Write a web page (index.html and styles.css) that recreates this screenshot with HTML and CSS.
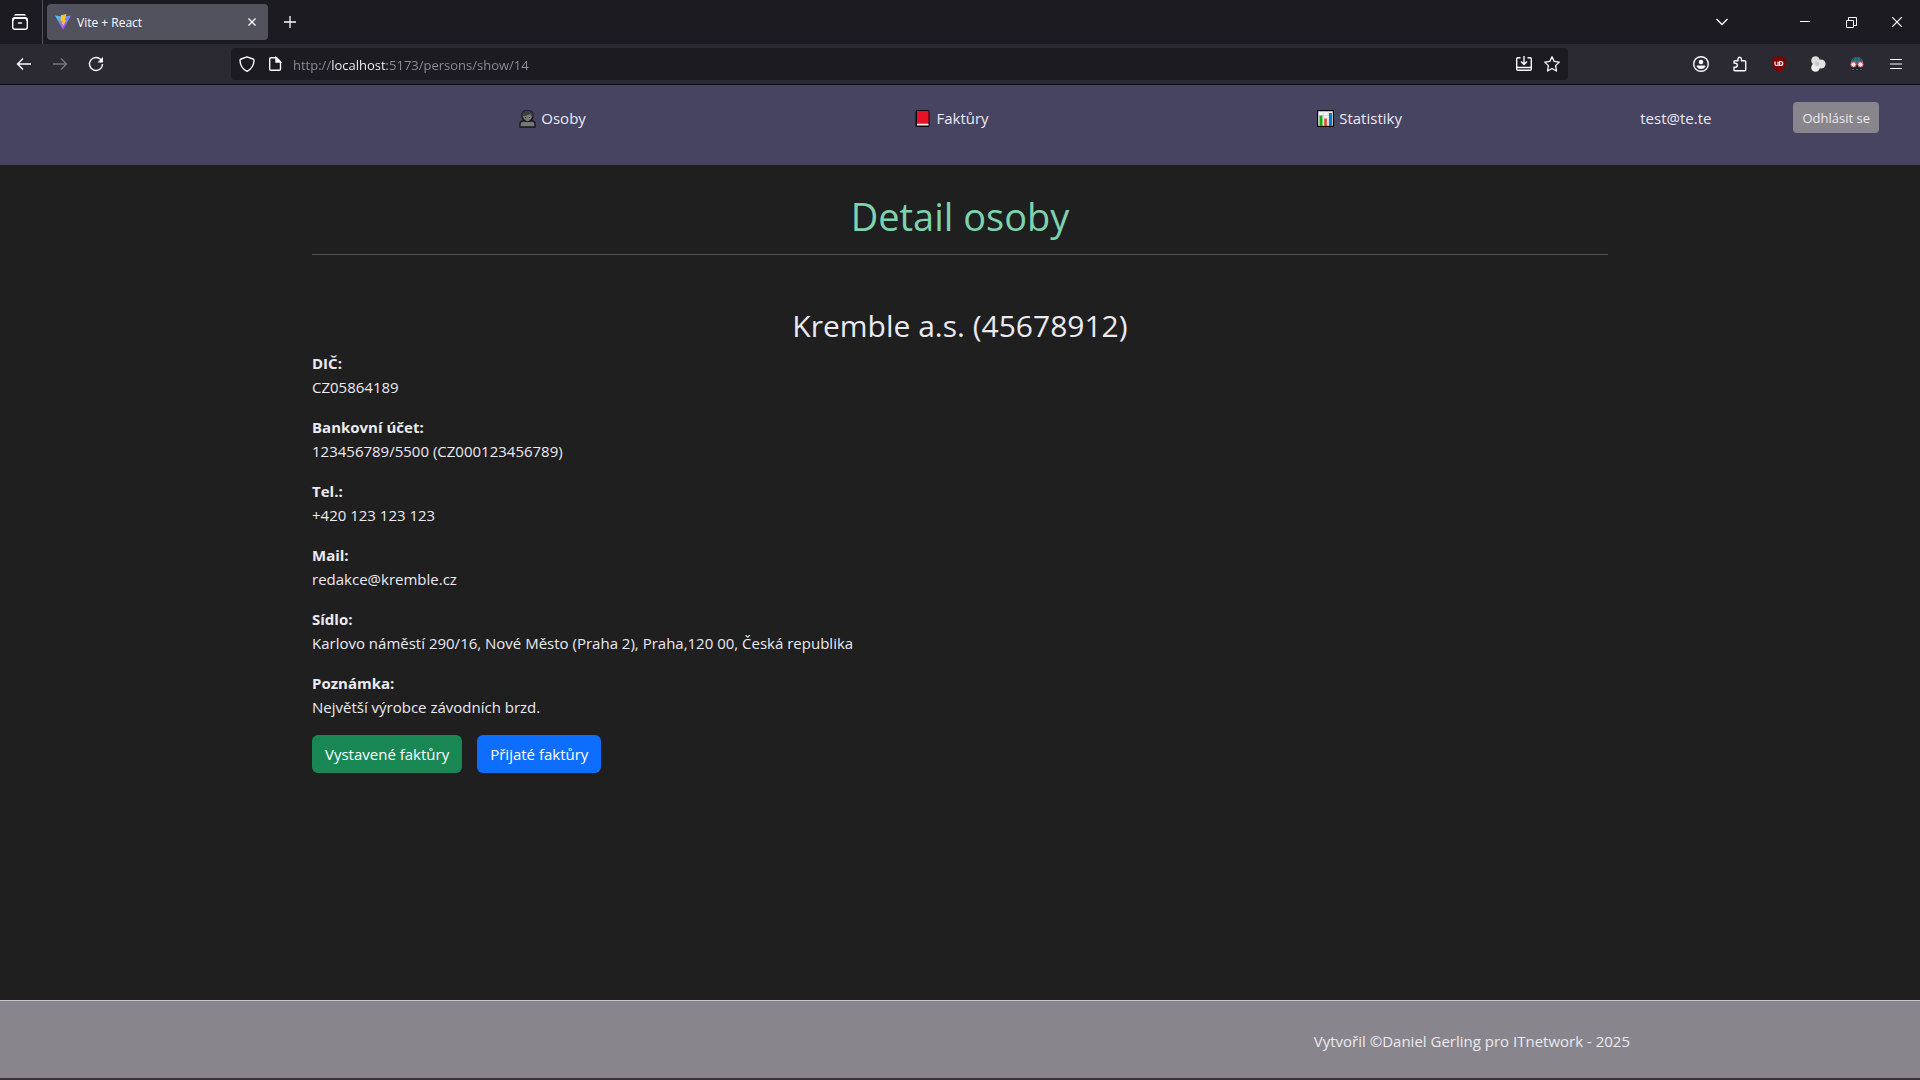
FILE: index.html
```html
<!DOCTYPE html>
<html lang="cs">
<head>
  <meta charset="UTF-8" />
  <meta name="viewport" content="width=device-width, initial-scale=1.0" />
  <title>Vite + React</title>
  <link rel="stylesheet" href="styles.css">
</head>
<body>

  <!-- Browser tabs -->
  <div class="tabbar">
    <button class="icon-btn view-btn" aria-label="Firefox View">
      <svg width="16" height="16" viewBox="0 0 16 16" fill="none" stroke="#fbfbfe" stroke-width="1.4" stroke-linecap="round"><path d="M3 1.2Q3.300 .7 4 .7h8q.7 0 1 .5"/><rect x=".7" y="3.700" width="14.600" height="11.600" rx="2"/><path d="M1 6.500q.3-2.300 2-2.300h10q1.700 0 2 2.300M6.500 9h3"/></svg>
    </button>
    <div class="tab">
      <svg width="16" height="16" viewBox="0 0 16 16"><defs><linearGradient id="vite" x1="0" y1="0" x2=".6" y2="1"><stop offset="0" stop-color="#41d1ff"/><stop offset="1" stop-color="#bd34fe"/></linearGradient></defs><path d="M0 1.500l8 1.300 8-1.300L8 16z" fill="url(#vite)"/><path d="M11.500 0L6 1.200 5.500 7.500l2-.4-.7 3 1.200-.3-.8 3.700L11.500 6l-2 .4L11.500 0z" fill="#ffc61c"/></svg>
      <span class="tab-title">Vite + React</span>
      <button class="icon-btn tab-close" aria-label="Close tab">
        <svg width="8" height="8" viewBox="0 0 8 8" stroke="#fbfbfe" stroke-width="1.300"><path d="M.5.5l7 7M7.500.5l-7 7"/></svg>
      </button>
    </div>
    <button class="icon-btn new-tab" aria-label="New tab">
      <svg width="12" height="12" viewBox="0 0 12 12" stroke="#fbfbfe" stroke-width="1.300"><path d="M6 0v12M0 6h12"/></svg>
    </button>
    <div class="window-btns">
      <button class="icon-btn tabs-list" aria-label="List all tabs">
        <svg width="12" height="8" viewBox="0 0 12 8" fill="none" stroke="#fbfbfe" stroke-width="1.300"><path d="M.5 1L6 6.500 11.500 1"/></svg>
      </button>
      <button class="icon-btn" aria-label="Minimize">
        <svg width="10" height="10" viewBox="0 0 10 10" stroke="#fff"><path d="M0 4.500h10"/></svg>
      </button>
      <button class="icon-btn" aria-label="Restore">
        <svg width="11" height="11" viewBox="0 0 11 11" fill="none" stroke="#fff"><path d="M.5 3.500h7v7h-7zM2.500 3.500v-3h8v8h-3"/></svg>
      </button>
      <button class="icon-btn" aria-label="Close">
        <svg width="10" height="10" viewBox="0 0 10 10" stroke="#fff" stroke-width="1.200"><path d="M0 0l10 10M10 0L0 10"/></svg>
      </button>
    </div>
  </div>

  <!-- Browser toolbar -->
  <div class="toolbar">
    <div class="nav-btns">
      <button class="icon-btn" aria-label="Back">
        <svg width="16" height="16" viewBox="0 0 16 16" fill="none" stroke="#fbfbfe" stroke-width="1.400"><path d="M15 8H2M7 2.500L1.500 8 7 13.500"/></svg>
      </button>
      <button class="icon-btn" aria-label="Forward" disabled>
        <svg width="16" height="16" viewBox="0 0 16 16" fill="none" stroke="#77767e" stroke-width="1.400"><path d="M1 8h13M9 2.500L14.500 8 9 13.500"/></svg>
      </button>
      <button class="icon-btn" aria-label="Reload">
        <svg width="16" height="16" viewBox="0 0 16 16" fill="none" stroke="#fbfbfe" stroke-width="1.400"><path d="M13.500 4.500A6.500 6.500 0 1 0 14.500 8"/><path d="M15 1v5.500H9.500z" fill="#fbfbfe" stroke="none"/></svg>
      </button>
    </div>
    <div class="urlbar">
      <svg width="16" height="16" viewBox="0 0 16 16" fill="none" stroke="#fbfbfe" stroke-width="1.400"><path d="M8 .8l6 2.200q1 .4 1 1.500-.3 7.500-7 10.800Q1.300 12 1 4.500 1 3.400 2 3z" stroke-linejoin="round"/></svg>
      <svg class="page-icon" width="16" height="16" viewBox="0 0 16 16" fill="none" stroke="#fbfbfe" stroke-width="1.400"><path d="M4 1.700h5.500l4 4V13q0 1.300-1.300 1.300H4q-1.300 0-1.300-1.300V3q0-1.300 1.300-1.300z"/><path d="M9 1.500V6h4.500z" fill="#fbfbfe"/></svg>
      <input class="url" type="text" aria-label="Address" value="http://localhost:5173/persons/show/14" spellcheck="false">
      <button class="icon-btn" aria-label="Install">
        <svg width="16" height="16" viewBox="0 0 16 16" fill="none" stroke="#fbfbfe" stroke-width="1.400"><path d="M4.500 1.700H2q-1.300 0-1.300 1.300v10q0 1.300 1.300 1.300h12q1.300 0 1.300-1.300V3q0-1.300-1.300-1.300h-2.500M1 11.500h14M8 0v7M5 5.500l3 3 3-3"/></svg>
      </button>
      <button class="icon-btn" aria-label="Bookmark">
        <svg width="16" height="16" viewBox="0 0 16 16" fill="none" stroke="#fbfbfe" stroke-width="1.300" stroke-linejoin="round"><path d="M8 .8l2.200 4.600 5.100.7-3.700 3.500.9 5.400L8 12.500 3.500 15l.9-5.400L.7 6.100l5.100-.7z"/></svg>
      </button>
    </div>
    <div class="ext-btns">
      <button class="icon-btn" aria-label="Account">
        <svg width="16" height="16" viewBox="0 0 16 16"><circle cx="8" cy="8" r="7.300" fill="none" stroke="#fbfbfe" stroke-width="1.400"/><circle cx="8" cy="6" r="2.300" fill="#fbfbfe"/><path d="M3.500 10.500q0-1 1-1h7q1 0 1 1Q11 13 8 13t-4.500-2.500z" fill="#fbfbfe"/></svg>
      </button>
      <button class="icon-btn" aria-label="Extensions">
        <svg width="16" height="16" viewBox="0 0 16 16" fill="none" stroke="#fbfbfe" stroke-width="1.400" stroke-linejoin="round"><path d="M2 7V5.500Q2 4.700 3 4.700h3V3q0-1.800 1.700-1.800T9.400 3v1.700h3.300q1 0 1 1v8q0 1-1 1H3q-1 0-1-1v-2.500h1.500q1.800 0 1.800-2T3.500 7.200z"/></svg>
      </button>
      <button class="icon-btn" aria-label="uBlock Origin">
        <svg width="16" height="16" viewBox="0 0 16 16"><path d="M8 0q3 1.500 6.500 1.500V8q0 5-6.500 8-6.500-3-6.500-8V1.500Q5 1.500 8 0z" fill="#800000"/><path d="M4 5.500v2.500q0 1.500 1.500 1.500H7v-4M8.700 5.500v4h1q2 0 2-2t-2-2z" fill="none" stroke="#fff" stroke-width="1.200"/></svg>
      </button>
      <button class="icon-btn" aria-label="Containers">
        <svg width="16" height="16" viewBox="0 0 16 16"><circle cx="5.500" cy="4.500" r="4.300" fill="#dcdcdc"/><circle cx="5.500" cy="11.500" r="4.300" fill="#eee"/><circle cx="11" cy="8" r="4.600" fill="#e2e2e2"/><circle cx="7" cy="8" r="2.300" fill="#c8c8c8"/></svg>
      </button>
      <button class="icon-btn" aria-label="Privacy">
        <svg width="16" height="16" viewBox="0 0 16 16"><path d="M1.500 8.500Q1.500 1 8 1t6.500 7.500z" fill="#34707e"/><path d="M8 1v4M5 2l-1 3M11 2l1 3" stroke="#204954"/><path d="M2.500 9h11v6h-11z" fill="#15242d"/><circle cx="4.500" cy="8.500" r="2.600" fill="#f3ebe6" stroke="#d75447"/><circle cx="11.500" cy="8.500" r="2.600" fill="#f3ebe6" stroke="#d75447"/><path d="M3 13.500h2M7 13.500h2M11 13.500h2" stroke="#34707e"/></svg>
      </button>
      <button class="icon-btn" aria-label="Menu">
        <svg width="12" height="12" viewBox="0 0 12 12" stroke="#fbfbfe" stroke-width="1.200"><path d="M0 1.500h12M0 6h12M0 10.500h12"/></svg>
      </button>
    </div>
  </div>

  <!-- Navigation -->
  <nav class="navbar">
    <ul class="nav-list">
      <li>
        <a href="/persons">
          <svg width="17" height="19" viewBox="0 0 17 19"><path d="M1 18v-3q0-3 3-3h2q-3-2-3-5 0-5.500 5.500-5.500T14 7q0 3-3 5h2q3 0 3 3v3z" fill="#777" stroke="#171719" stroke-width="1.400"/><path d="M3 7q0-5.500 5.500-5.500T14 7q-2 0-3-2-3 2-8 2z" fill="#3d3d3f"/><path d="M5.500 12q3 1.500 6 0M6.500 8v1M10.500 8v1" fill="none" stroke="#171719"/></svg>
          Osoby
        </a>
      </li>
      <li>
        <a href="/invoices">
          <svg width="17" height="19" viewBox="0 0 17 19"><rect x="1.500" y="1" width="14" height="17" rx="1.500" fill="#0c0b10"/><path d="M3 2h11.500v12H3z" fill="#e81224"/><path d="M3 14.500h11.500v2H3z" fill="#f2f2f2"/></svg>
          Faktůry
        </a>
      </li>
      <li>
        <a href="/statistics">
          <svg width="17" height="17" viewBox="0 0 17 17"><path d="M.6.6h15.800v15.800H.6z" fill="#f2f2f2" stroke="#080808" stroke-width="1.200"/><path d="M1 5.500h15M1 10.500h15M6.500 1v15M11.500 1v15" stroke="#d2d2d2" stroke-width=".6"/><path d="M2.500 5.500h3V16h-3z" fill="#16a80c"/><path d="M7.300 8.500h2.500V16H7.300z" fill="#f03a17"/><path d="M12 3h3v13h-3z" fill="#0078d7"/></svg>
          Statistiky
        </a>
      </li>
    </ul>
    <span class="user">test@te.te</span>
    <button class="btn btn-logout">Odhlásit se</button>
  </nav>

  <!-- Person detail -->
  <main class="container">
    <h1>Detail osoby</h1>
    <hr>
    <h2>Kremble a.s. (45678912)</h2>
    <p><strong>DIČ:</strong><br>CZ05864189</p>
    <p><strong>Bankovní účet:</strong><br>123456789/5500 (CZ000123456789)</p>
    <p><strong>Tel.:</strong><br>+420 123 123 123</p>
    <p><strong>Mail:</strong><br>redakce@kremble.cz</p>
    <p><strong>Sídlo:</strong><br>Karlovo náměstí 290/16, Nové Město (Praha 2), Praha,120 00, Česká republika</p>
    <p><strong>Poznámka:</strong><br>Největší výrobce závodních brzd.</p>
    <div class="actions">
      <button class="btn btn-success">Vystavené faktůry</button>
      <button class="btn btn-primary">Přijaté faktůry</button>
    </div>
  </main>

  <footer class="footer">
    <p>Vytvořil ©Daniel Gerling pro ITnetwork - 2025</p>
  </footer>

</body>
</html>
```
FILE: styles.css
```css
* {
  box-sizing: border-box;
}

body {
  margin: 0;
  min-height: 100vh;
  display: flex;
  flex-direction: column;
  background: #1f1f1f;
  color: #ebe9f2;
  font-family: 'Segoe UI', 'Open Sans', sans-serif;
  font-size: 15px;
  line-height: 24px;
}

button {
  font-family: inherit;
  cursor: pointer;
}

svg {
  display: block;
  flex: none;
}

/* Browser window */
.icon-btn {
  display: flex;
  align-items: center;
  justify-content: center;
  padding: 0;
  border: none;
  background: none;
}

.tabbar {
  display: flex;
  align-items: center;
  height: 44px;
  background: #1c1b22;
  font-size: 12px;
}

.view-btn {
  width: 43px;
  height: 44px;
  padding-right: 3px;
  border-right: 1px solid #52525e;
}

.tab {
  display: flex;
  align-items: center;
  gap: 6px;
  width: 221px;
  height: 36px;
  margin-left: 4px;
  padding: 0 12px 0 8px;
  border-radius: 4px;
  background: #52525e;
  color: #fbfbfe;
}

.tab-title {
  padding-top: 2px;
}

.tab-close {
  margin-left: auto;
}

.new-tab {
  width: 43px;
}

.window-btns {
  display: flex;
  margin-left: auto;
}

.window-btns .icon-btn {
  width: 46px;
}

.window-btns .tabs-list {
  margin-right: 37px;
}

.toolbar {
  display: flex;
  align-items: center;
  height: 41px;
  padding: 0 16px;
  border-bottom: 1px solid #0c0c0d;
  background: #2b2a33;
}

.nav-btns {
  display: flex;
  gap: 20px;
}

.urlbar {
  display: flex;
  flex: 1;
  align-items: center;
  gap: 12px;
  height: 32px;
  margin: 0 125px 0 127px;
  padding: 0 8px;
  border-radius: 4px;
  background: #1c1b22;
}

.url {
  flex: 1;
  margin-left: -2px;
  padding: 2px 0 0;
  border: none;
  outline: none;
  background: linear-gradient(to right, #8f8f98 39px, #fbfbfe 39px, #fbfbfe 94px, #8f8f98 94px);
  -webkit-background-clip: text;
  background-clip: text;
  color: transparent;
  font-family: inherit;
  font-size: 13px;
}

.ext-btns {
  display: flex;
  align-items: center;
  gap: 23px;
}

.ext-btns .icon-btn {
  min-width: 16px;
}

/* Navigation */
.navbar {
  display: flex;
  align-items: flex-start;
  height: 80px;
  padding: 17px 41px 0 355px;
  background: #474462;
}

.nav-list {
  display: flex;
  flex: 1;
  justify-content: space-around;
  margin: 0;
  padding: 4px 0 0;
  list-style: none;
}

.nav-list a {
  display: flex;
  align-items: center;
  gap: 5px;
  color: inherit;
  text-decoration: none;
}

.user {
  padding: 4px 82px 0 74px;
}

/* Buttons */
.btn {
  padding: 6px 12px;
  border: 1px solid transparent;
  border-radius: 6px;
  color: #fff;
  font-size: 15px;
  line-height: 24px;
}

.btn-logout {
  padding: 5px 8px 3px;
  border-radius: 4px;
  background: #88868c;
  color: #ebe9f2;
  font-size: 13px;
  line-height: 21px;
}

.btn-success {
  background: #198754;
}

.btn-primary {
  background: #0d6efd;
}

/* Content */
.container {
  flex: 1;
  width: 100%;
  max-width: 1320px;
  margin: 0 auto;
  padding: 27px 12px;
}

h1, h2 {
  margin: 0 0 8px;
  font-weight: 400;
  text-align: center;
}

h1 {
  color: #7dd3ae;
  font-size: 38px;
  line-height: 48px;
}

h2 {
  margin-bottom: 6px;
  font-size: 30px;
  line-height: 38px;
}

hr {
  margin: 14px 0 52px;
  border: none;
  border-top: 1px solid #525254;
}

p {
  margin: 0 0 16px;
}

.actions {
  display: flex;
  gap: 15px;
}

.footer {
  height: 80px;
  padding: 28px 290px 0 24px;
  border-top: 1px solid #c8c7ca;
  border-bottom: 2px solid #383436;
  background: #88868c;
  text-align: right;
}

.footer p {
  margin: 0;
}
```
